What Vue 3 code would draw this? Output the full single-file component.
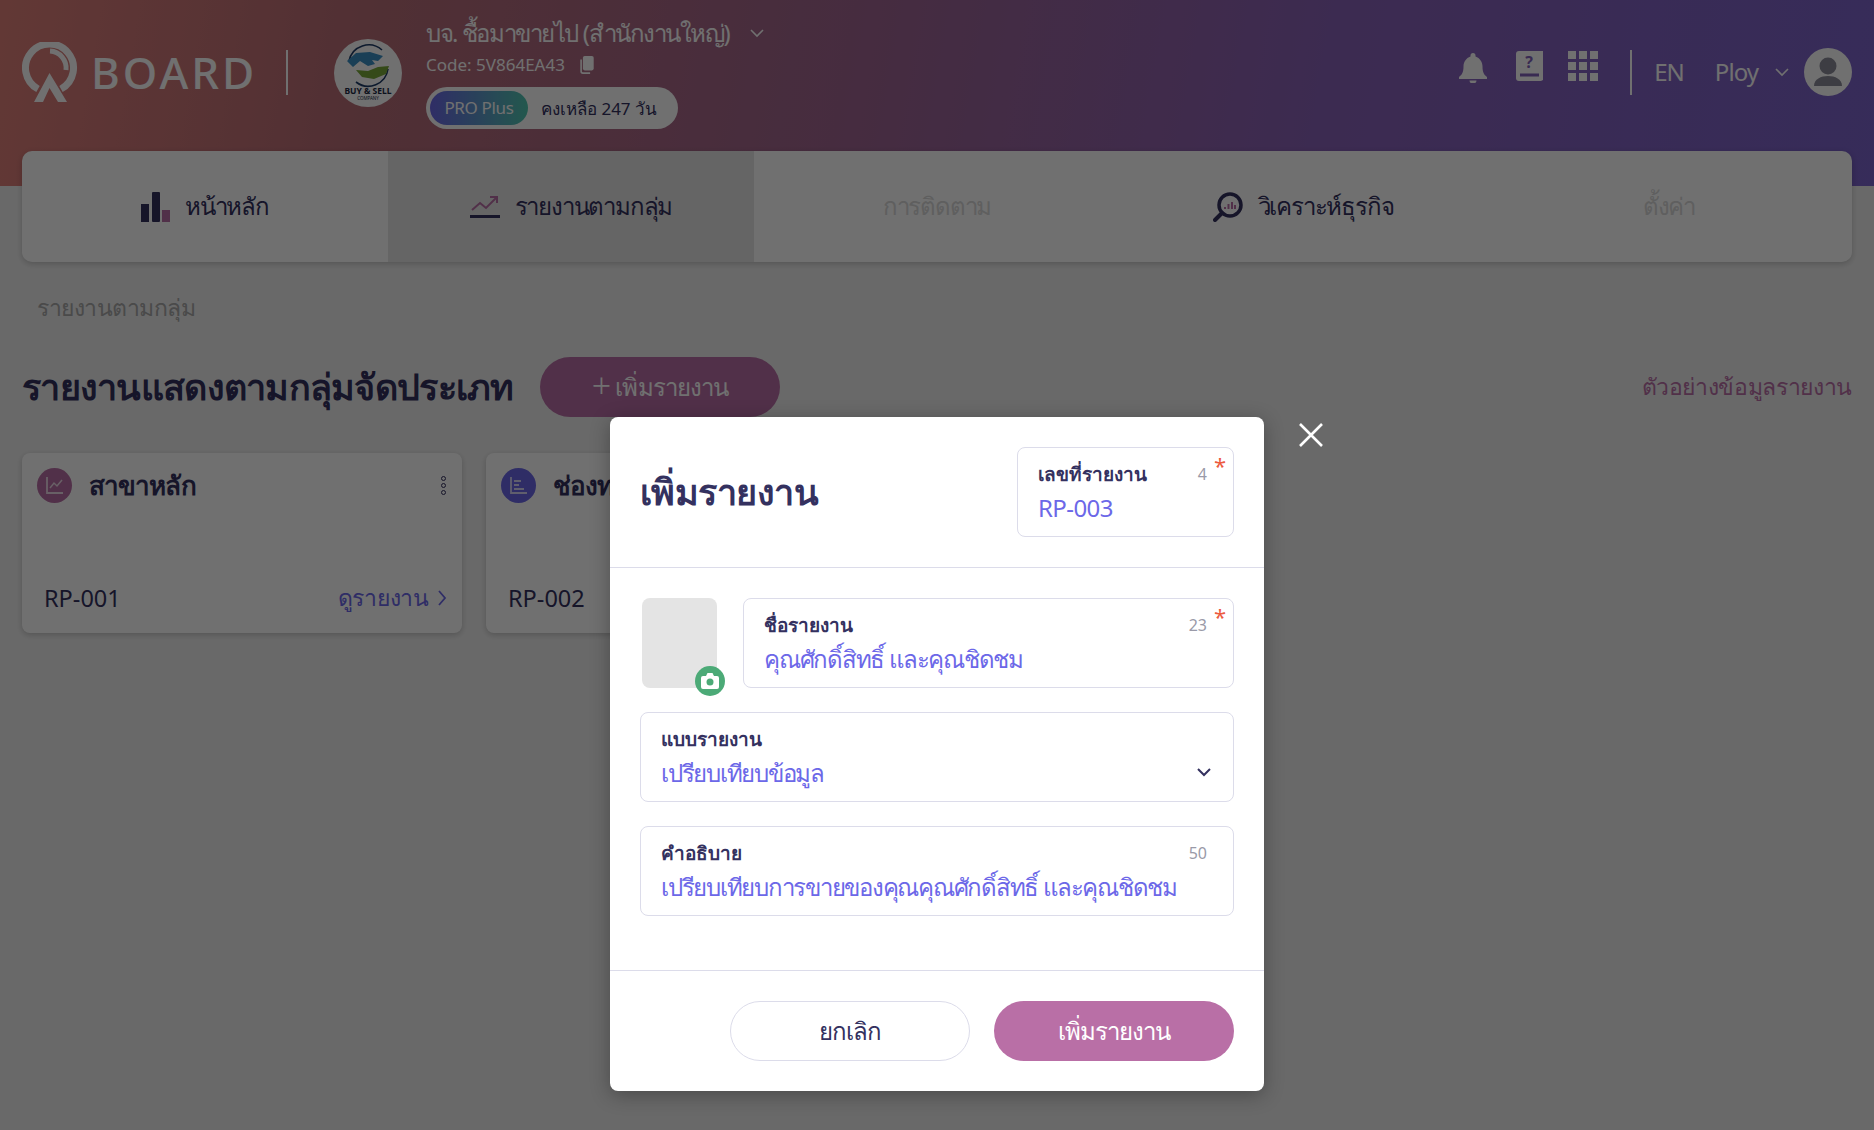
<script setup>
const tabs = [
  { label: 'หน้าหลัก', icon: 'bars' },
  { label: 'รายงานตามกลุ่ม', icon: 'trend', active: true },
  { label: 'การติดตาม', disabled: true },
  { label: 'วิเคราะห์ธุรกิจ', icon: 'search' },
  { label: 'ตั้งค่า', disabled: true },
]
const cards = [
  { title: 'สาขาหลัก', code: 'RP-001', tone: 'pink' },
  { title: 'ช่องทาง', code: 'RP-002', tone: 'blue' },
]
</script>

<template>
  <div class="page">
    <header class="top">
      <div class="brand">
        <svg class="logo" viewBox="0 0 56 60" width="56" height="60">
          <path d="M16 47 A24 24 0 1 1 39 47" fill="none" stroke="#fff" stroke-width="7" />
          <path d="M28 9 A17 17 0 0 1 44 28" fill="none" stroke="#fff" stroke-width="5" />
          <path d="M12 60 L27.500 31 L45 60 H36 L27.500 46 L21 60 Z" fill="#fff" />
        </svg>
        <span class="wordmark">BOARD</span>
      </div>
      <span class="rule first"></span>
      <div class="company-logo">
        <svg viewBox="0 0 68 68" width="68" height="68">
          <circle cx="34" cy="34" r="34" fill="#fff" />
          <path d="M15 22 A20 20 0 0 1 48 11" fill="none" stroke="#1d3a66" stroke-width="1.600" />
          <path d="M54 30 A20 20 0 0 1 22 43" fill="none" stroke="#1d3a66" stroke-width="1.600" />
          <path d="M13 22 L22 14 L36 13 L49 17 L44 22 L38 21 L41 25 L34 27 L26 22 L19 28 Z" fill="#3b8fc4" />
          <path d="M22 31 L34 32 L44 28 L55 27 L52 35 L40 40 L28 38 Z" fill="#79a83a" />
          <text x="34" y="55" class="co-a" text-anchor="middle">BUY &amp; SELL</text>
          <text x="34" y="61" class="co-b" text-anchor="middle">COMPANY</text>
        </svg>
      </div>
      <div class="company">
        <div class="co-name">บจ. ชื้อมาขายไป (สำนักงานใหญ่)
          <svg class="chev-name" viewBox="0 0 16 10" width="16" height="10"><path d="M2 2l6 6 6-6" fill="none" stroke="#fff" stroke-width="1.600" /></svg>
        </div>
        <div class="co-code">Code: 5V864EA43
          <svg viewBox="0 0 16 20" width="15" height="18"><path d="M6 0h8a2 2 0 0 1 2 2v12a2 2 0 0 1-2 2H6a2 2 0 0 1-2-2V2a2 2 0 0 1 2-2z" fill="#fff" /><path d="M2 4v13a2 2 0 0 0 2 2h8" fill="none" stroke="#fff" stroke-width="1.800" /></svg>
        </div>
        <div class="plan"><span class="plan-tag">PRO Plus</span><span class="plan-left">คงเหลือ 247 วัน</span></div>
      </div>
      <div class="tools">
        <svg class="bell" viewBox="0 0 28 30" width="28" height="30"><path d="M14 0a2.500 2.500 0 0 1 2.500 2.500v1C21 5 23.500 9 23.500 13.500c0 6 1.500 8 4.500 10.500v2H0v-2c3-2.500 4.500-4.500 4.500-10.500C4.500 9 7 5 11.500 3.500v-1A2.500 2.500 0 0 1 14 0z" fill="#fff" /><path d="M10.500 27.500h7a3.500 3 0 0 1-7 0z" fill="#fff" /></svg>
        <svg class="book" viewBox="0 0 27 30" width="27" height="30"><path d="M3 0H27V29L25 30H3a3 3 0 0 1-3-3V3a3 3 0 0 1 3-3z" fill="#fff" /><rect x="4" y="22.500" width="19" height="3" fill="#8262bc" /><text x="13" y="17" class="q" text-anchor="middle">?</text></svg>
        <div class="grid-ico"><i v-for="n in 9" :key="n"></i></div>
      </div>
      <span class="rule second"></span>
      <span class="lang">EN</span>
      <span class="user">Ploy</span>
      <svg class="chev-user" viewBox="0 0 16 10" width="16" height="10"><path d="M2 2l6 6 6-6" fill="none" stroke="#fff" stroke-width="1.600" /></svg>
      <div class="avatar">
        <svg viewBox="0 0 48 48" width="48" height="48"><circle cx="24" cy="18" r="8.500" fill="#8b8b98" /><path d="M10 38c0-7 7-10 14-10s14 3 14 10z" fill="#8b8b98" /></svg>
      </div>
    </header>

    <nav class="tabs">
      <div v-for="t in tabs" :key="t.label" class="tab" :class="{ active: t.active, disabled: t.disabled }">
        <svg v-if="t.icon === 'bars'" viewBox="0 0 29 30" width="29" height="30"><rect x="0" y="12" width="8" height="18" fill="#34315f" /><rect x="11" y="0" width="8" height="30" rx="1" fill="#34315f" /><rect x="21" y="18" width="8" height="12" fill="#b96fa6" /></svg>
        <svg v-if="t.icon === 'trend'" viewBox="0 0 30 24" width="30" height="24"><path d="M2 15l8-7 6 5L27 2M20 2h7v6" fill="none" stroke="#b96fa6" stroke-width="2" /><rect x="0" y="20" width="30" height="3" fill="#34315f" /></svg>
        <svg v-if="t.icon === 'search'" viewBox="0 0 30 30" width="30" height="30"><circle cx="17" cy="13" r="11" fill="none" stroke="#34315f" stroke-width="3.500" /><path d="M9 21l-7 7" stroke="#34315f" stroke-width="4" stroke-linecap="round" /><path d="M12 17v-2M15.500 17v-5M19 17v-7M22 17v-4" stroke="#b96fa6" stroke-width="2" /></svg>
        <span>{{ t.label }}</span>
      </div>
    </nav>

    <div class="crumb">รายงานตามกลุ่ม</div>

    <div class="heading">
      <h1>รายงานแสดงตามกลุ่มจัดประเภท</h1>
      <button class="add"><span class="plus">+</span> เพิ่มรายงาน</button>
      <a class="sample">ตัวอย่างข้อมูลรายงาน</a>
    </div>

    <div class="cards">
      <article v-for="c in cards" :key="c.code" class="card">
        <div class="card-head">
          <span class="disc" :class="c.tone">
            <svg v-if="c.tone === 'pink'" viewBox="0 0 20 20" width="20" height="20"><path d="M2 2v16h16" fill="none" stroke="#fff" stroke-opacity=".75" stroke-width="1.800" /><path d="M5 13l4-5 3 3 5-6" fill="none" stroke="#fff" stroke-opacity=".75" stroke-width="1.500" /></svg>
            <svg v-else viewBox="0 0 20 20" width="20" height="20"><path d="M2 2v16h16" fill="none" stroke="#fff" stroke-opacity=".75" stroke-width="1.800" /><path d="M5 6h7M5 10h5M5 14h10" stroke="#fff" stroke-opacity=".75" stroke-width="2" /></svg>
          </span>
          <h2>{{ c.title }}</h2>
          <span class="dots"><i></i><i></i><i></i></span>
        </div>
        <div class="card-foot">
          <span class="code">{{ c.code }}</span>
          <a class="view">ดูรายงาน
            <svg viewBox="0 0 10 18" width="10" height="18"><path d="M2 2l6 7-6 7" fill="none" stroke="currentColor" stroke-width="1.800" /></svg>
          </a>
        </div>
      </article>
    </div>

    <div class="scrim">
      <section class="modal">
        <svg class="close" viewBox="0 0 26 26" width="26" height="26"><path d="M2 2l22 22M24 2L2 24" stroke="#fff" stroke-width="2.600" /></svg>
        <div class="modal-head">
          <h3>เพิ่มรายงาน</h3>
          <div class="field small">
            <div class="f-top"><span class="f-label">เลขที่รายงาน</span><span class="count">4</span></div>
            <div class="f-val latin">RP-003</div>
            <span class="star">*</span>
          </div>
        </div>
        <div class="modal-body">
          <div class="row">
            <div class="thumb">
              <span class="cam">
                <svg viewBox="0 0 18 16" width="18" height="16"><path d="M2 3h3l1.500-3h5L13 3h3a2 2 0 0 1 2 2v9a2 2 0 0 1-2 2H2a2 2 0 0 1-2-2V5a2 2 0 0 1 2-2z" fill="#fff" /><circle cx="9" cy="9" r="3.500" fill="#4caa77" /></svg>
              </span>
            </div>
            <div class="field grow">
              <div class="f-top"><span class="f-label">ชื่อรายงาน</span><span class="count">23</span></div>
              <div class="f-val">คุณศักดิ์สิทธิ์ และคุณชิดชม</div>
              <span class="star">*</span>
            </div>
          </div>
          <div class="field">
            <div class="f-top"><span class="f-label">แบบรายงาน</span></div>
            <div class="f-val">เปรียบเทียบข้อมูล</div>
            <svg class="select" viewBox="0 0 16 10" width="16" height="10"><path d="M2 2l6 6 6-6" fill="none" stroke="#34315f" stroke-width="2" /></svg>
          </div>
          <div class="field">
            <div class="f-top"><span class="f-label">คำอธิบาย</span><span class="count">50</span></div>
            <div class="f-val">เปรียบเทียบการขายของคุณคุณศักดิ์สิทธิ์ และคุณชิดชม</div>
          </div>
        </div>
        <div class="modal-foot">
          <button class="btn ghost">ยกเลิก</button>
          <button class="btn solid">เพิ่มรายงาน</button>
        </div>
      </section>
    </div>
  </div>
</template>

<style>
html, body { margin: 0; }
</style>

<style scoped>
.page {
  position: relative;
  width: 1874px;
  height: 1130px;
  overflow: hidden;
  background: #f0f0f0;
  font-family: "Noto Sans", "Liberation Sans", sans-serif;
  color: #34315f;
}
h1, h2, h3 { margin: 0; }
.top {
  box-sizing: border-box;
  height: 186px;
  padding: 0 22px;
  display: flex;
  align-items: flex-start;
  background: linear-gradient(100deg, #e0807a 0%, #b76d77 20%, #a06590 45%, #8a62b8 70%, #7c64cc 100%);
  color: #fff;
}
.brand { display: flex; align-items: center; margin-top: 42px; }
.wordmark { width: 160px; margin-left: 13px; font-size: 44px; line-height: 60px; letter-spacing: 3px; font-weight: 500; white-space: nowrap; }
.rule { width: 2px; height: 45px; margin-top: 50px; background: #fff; }
.rule.first { margin-left: 35px; }
.rule.second { margin-left: 32px; }
.company-logo { margin: 39px 24px 0 46px; height: 68px; }
.co-a { font-size: 8.500px; font-weight: 700; fill: #1d2a44; letter-spacing: 0; }
.co-b { font-size: 4.500px; fill: #1d2a44; letter-spacing: 0; }
.company { display: flex; flex-direction: column; align-items: flex-start; margin-top: 16px; }
.co-name { font-size: 24px; line-height: 34px; display: flex; align-items: center; gap: 20px; letter-spacing: -.06em; }
.co-code { font-size: 17px; line-height: 24px; margin-top: 3px; display: flex; align-items: center; gap: 14px; }
.plan {
  margin-top: 10px;
  height: 42px;
  width: 252px;
  box-sizing: border-box;
  padding: 4px;
  border-radius: 21px;
  background: #fff;
  display: flex;
  align-items: center;
}
.plan-tag {
  width: 98px;
  height: 34px;
  border-radius: 17px;
  line-height: 34px;
  text-align: center;
  font-size: 17px;
  letter-spacing: -.02em;
  background: linear-gradient(90deg, #6c68e8, #50c8b0);
}
.plan-left { margin-left: 13px; font-size: 17px; color: #34315f; white-space: nowrap; }
.tools { margin-left: auto; margin-top: 51px; display: flex; align-items: flex-start; }
.bell { margin: 2px 29px 0 0; }
.book { margin-right: 25px; }
.q { font-size: 16px; font-weight: 700; fill: #8262bc; }
.grid-ico { width: 30px; height: 30px; display: grid; grid-template-columns: repeat(3, 8px); grid-auto-rows: 8px; gap: 3px; }
.grid-ico i { background: #fff; }
.lang { margin: 56px 0 0 22px; font-size: 24px; line-height: 32px; letter-spacing: -.04em; }
.user { margin: 56px 0 0 31px; font-size: 24px; line-height: 32px; letter-spacing: -.04em; }
.chev-user { margin: 67px 14px 0 16px; }
.avatar { margin-top: 48px; width: 48px; height: 48px; border-radius: 50%; background: #fff; overflow: hidden; }

.tabs {
  position: relative;
  margin: -35px 22px 0;
  height: 111px;
  display: flex;
  background: #fff;
  border-radius: 10px;
  overflow: hidden;
  box-shadow: 0 2px 6px rgba(0, 0, 0, .2);
}
.tab { flex: 1; display: flex; align-items: center; justify-content: center; gap: 15px; font-size: 24px; letter-spacing: -.05em; color: #34315f; }
.tab.active { background: #e6e6e6; }
.tab.disabled { color: #d8d8d8; }

.crumb { margin: 28px 0 0 37px; font-size: 23px; line-height: 34px; letter-spacing: -.02em; color: #a8a8a8; }
.heading { margin: 33px 22px 0; height: 60px; display: flex; align-items: center; }
.heading h1 { font-size: 36px; font-weight: 600; letter-spacing: -.02em; color: #34315f; white-space: nowrap; }
.add {
  margin-left: 26px;
  width: 240px;
  height: 60px;
  border: 0;
  border-radius: 30px;
  background: #b96fa6;
  color: #fff;
  font: inherit;
  font-size: 24px;
  letter-spacing: -.04em;
}
.plus { font-size: 34px; line-height: 1; font-weight: 300; vertical-align: -2px; }
.sample { margin-left: auto; font-size: 23px; letter-spacing: -.015em; color: #b96fa6; }

.cards { margin: 36px 0 0 22px; display: flex; gap: 24px; }
.card {
  box-sizing: border-box;
  width: 440px;
  height: 180px;
  padding: 15px 15px 0;
  background: #fff;
  border-radius: 8px;
  box-shadow: 0 2px 6px rgba(0, 0, 0, .2);
  display: flex;
  flex-direction: column;
  justify-content: space-between;
}
.card-head { display: flex; align-items: center; height: 34px; }
.disc { width: 35px; height: 35px; border-radius: 50%; display: flex; align-items: center; justify-content: center; flex: none; }
.disc.pink { background: #b96fa6; }
.disc.blue { background: #6c68e8; }
.card-head h2 { margin-left: 17px; font-size: 26px; font-weight: 600; letter-spacing: -.035em; color: #34315f; white-space: nowrap; }
.dots { margin-left: auto; margin-right: 1px; display: flex; flex-direction: column; gap: 2px; }
.dots i { box-sizing: border-box; width: 5px; height: 5px; border-radius: 50%; border: 1px solid #34315f; }
.card-foot { display: flex; justify-content: space-between; align-items: center; padding: 0 0 17px 7px; }
.code { font-size: 23.500px; color: #34315f; }
.view { display: flex; align-items: center; gap: 8px; font-size: 23px; letter-spacing: -.01em; color: #6c68e8; }

.scrim {
  position: absolute;
  inset: 0;
  background: rgba(0, 0, 0, .56);
  display: flex;
  justify-content: center;
  align-items: flex-start;
  padding-top: 417px;
}
.modal {
  position: relative;
  width: 654px;
  height: 674px;
  background: #fff;
  border-radius: 8px;
  box-shadow: 0 4px 20px rgba(0, 0, 0, .3);
  display: flex;
  flex-direction: column;
}
.close { position: absolute; left: 688px; top: 5px; }
.modal-head {
  box-sizing: border-box;
  height: 151px;
  padding: 30px 30px 0;
  display: flex;
  justify-content: space-between;
  align-items: flex-start;
  border-bottom: 1px solid #dcdcea;
}
.modal-head h3 { margin-top: 18px; font-size: 36px; line-height: 54px; font-weight: 600; letter-spacing: -.015em; color: #34315f; }
.modal-body { flex: 1; padding: 30px 30px 0; display: flex; flex-direction: column; gap: 24px; }
.row { display: flex; gap: 26px; padding-left: 2px; }
.thumb { position: relative; flex: none; width: 75px; height: 90px; background: #e4e4e4; border-radius: 8px; }
.cam { position: absolute; left: 53px; top: 68px; width: 30px; height: 30px; border-radius: 50%; background: #4caa77; display: flex; align-items: center; justify-content: center; }
.field {
  position: relative;
  box-sizing: border-box;
  height: 90px;
  padding: 12px 26px 0 20px;
  border: 1px solid #dcdcea;
  border-radius: 8px;
}
.field.small { width: 217px; }
.field.grow { flex: 1; }
.f-top { display: flex; justify-content: space-between; align-items: center; height: 28px; }
.f-label { font-size: 19px; font-weight: 600; color: #34315f; }
.count { font-size: 16px; color: #9a9aa8; }
.f-val { margin-top: 3px; font-size: 24px; line-height: 34px; letter-spacing: -.052em; color: #6c68e8; white-space: nowrap; }
.f-val.latin { letter-spacing: -.025em; }
.star { position: absolute; right: 7px; top: 6px; font-size: 22px; line-height: 22px; color: #ec5b3f; }
.select { position: absolute; right: 21px; top: 54px; }
.modal-foot {
  box-sizing: border-box;
  height: 121px;
  padding: 30px;
  display: flex;
  justify-content: flex-end;
  gap: 24px;
  border-top: 1px solid #dcdcea;
}
.btn { width: 240px; height: 60px; border-radius: 30px; font: inherit; font-size: 24px; letter-spacing: -.04em; }
.ghost { background: #fff; border: 1px solid #dcdcea; color: #34315f; }
.solid { background: #b96fa6; border: 0; color: #fff; }
</style>
